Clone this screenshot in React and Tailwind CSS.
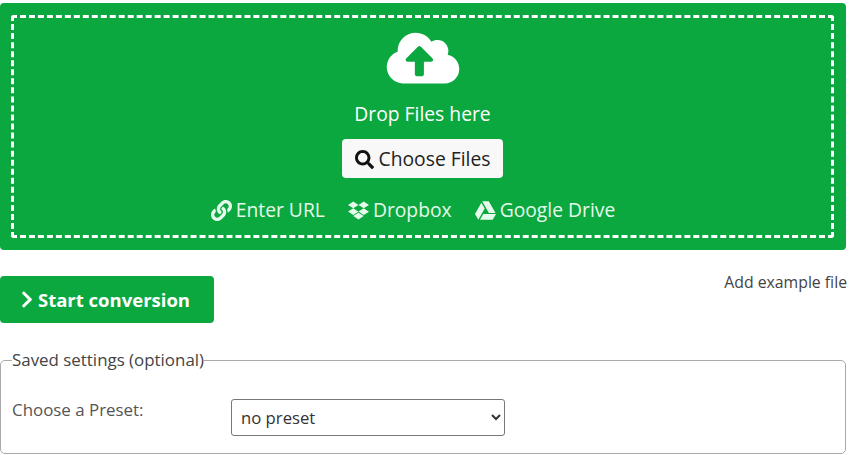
import React from "react";
import { FaCloudUploadAlt, FaSearch, FaLink, FaDropbox, FaGoogleDrive, FaChevronRight } from "react-icons/fa";

export default function App() {
  return (
    <div className="w-[850px] h-[455px] overflow-hidden bg-white pt-[3px] pr-[4px] font-['Open_Sans',sans-serif] text-[#333]">
      <div className="h-[247px] rounded-[4px] bg-[#0aa83f] pl-[11px] pr-[12px] pt-[12px]">
        <div className="flex h-[223px] flex-col items-center border-[3px] border-dashed border-white rounded-[3px] text-white">
          <div className="relative mt-[11px] h-[58px] w-[74px]">
            <div className="absolute left-[12px] top-[14px] h-[30px] w-[50px] bg-[#0aa83f]" />
            <FaCloudUploadAlt className="relative block w-[74px] h-[58px]" />
          </div>
          <div className="mt-[14px] text-[19.3px] leading-[26px]">Drop Files here</div>
          <button className="mt-[12px] flex h-[39px] w-[161px] items-center justify-center gap-[5px] rounded-[4px] bg-[#f8f8f8] pt-[1px] text-[19.3px] text-[#222]">
            <FaSearch className="w-[19px] h-[19px] text-[#111]" />
            Choose Files
          </button>
          <div className="mt-[19px] mr-[19px] flex items-center gap-[23px] text-[19.3px] leading-[26px] text-[#e6faec]">
            <span className="flex items-center gap-[4px]"><FaLink className="w-[21px] h-[21px]" />Enter URL</span>
            <span className="flex items-center gap-[4px]"><FaDropbox className="w-[21px] h-[21px]" />Dropbox</span>
            <span className="flex items-center gap-[4px]"><FaGoogleDrive className="w-[21px] h-[21px]" />Google Drive</span>
          </div>
        </div>
      </div>

      <div className="mt-[26px] flex items-start justify-between">
        <button className="flex h-[47px] w-[214px] items-center justify-center gap-[3px] rounded-[4px] bg-[#0aa83f] pr-[5px] text-[18.5px] font-bold text-white">
          <FaChevronRight className="w-[16px] h-[19px]" />
          Start conversion
        </button>
        <a className="mt-[-5px] translate-x-[1px] text-[15.8px] leading-[22px] text-[#444]">Add example file</a>
      </div>

      <fieldset className="mt-[26px] h-[105px] rounded-[5px] border border-[#aaa] pl-[11px]">
        <legend className="text-[16.9px] leading-[22px] text-[#444]">Saved settings (optional)</legend>
        <div className="flex items-start pt-[28px]">
          <label className="w-[219px] text-[16.9px] leading-[22px] text-[#555]">Choose a Preset:</label>
          <select className="h-[37px] w-[274px] rounded-[3px] border border-[#777] bg-white pl-[5px] text-[16.7px] text-[#333]">
            <option>no preset</option>
          </select>
        </div>
      </fieldset>
    </div>
  );
}
